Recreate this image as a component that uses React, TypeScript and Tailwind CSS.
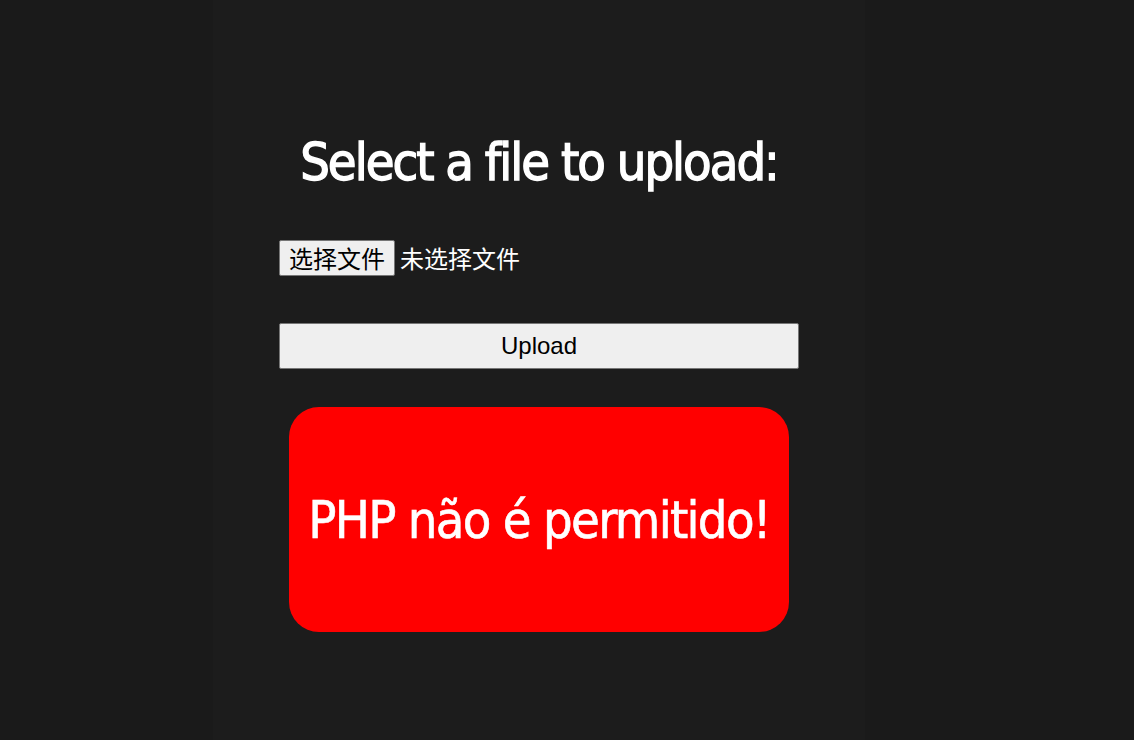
export default function App() {
  return (
    <div className="min-h-[740px] w-full bg-[#1a1a1a] flex pl-[213px]">
      <div className="w-[652px] min-h-[740px] bg-[#1c1c1c] flex flex-col items-center pt-[130px]">
        <h1 className="text-white text-[52px] leading-[64px] font-normal tracking-[-2px] [-webkit-text-stroke:1.3px_white] [font-family:'DejaVu_Sans_Condensed',Roboto,sans-serif]">
          Select a file to upload:
        </h1>
        <form className="w-[520px] mt-[46px] flex flex-col">
          <div className="flex items-center gap-[5px] [font-family:'Noto_Sans_CJK_SC',sans-serif]">
            <button
              type="button"
              className="h-[36px] w-[116px] bg-[#efefef] border border-[#767676] rounded-[2px] text-black text-[24px] leading-none"
            >
              选择文件
            </button>
            <span className="text-white text-[24px] leading-none">未选择文件</span>
          </div>
          <button
            type="button"
            className="mt-[47px] h-[46px] w-full bg-[#efefef] border border-[#767676] rounded-[2px] text-black text-[24px] [font-family:'Liberation_Sans',Arial,sans-serif]"
          >
            Upload
          </button>
        </form>
        <div className="mt-[38px] w-[500px] h-[225px] bg-[#ff0000] rounded-[30px] flex items-center justify-center">
          <span className="text-white text-[52px] tracking-[-1.7px] [-webkit-text-stroke:0.6px_white] [font-family:'DejaVu_Sans_Condensed',Roboto,sans-serif]">
            PHP não é permitido!
          </span>
        </div>
      </div>
    </div>
  );
}
